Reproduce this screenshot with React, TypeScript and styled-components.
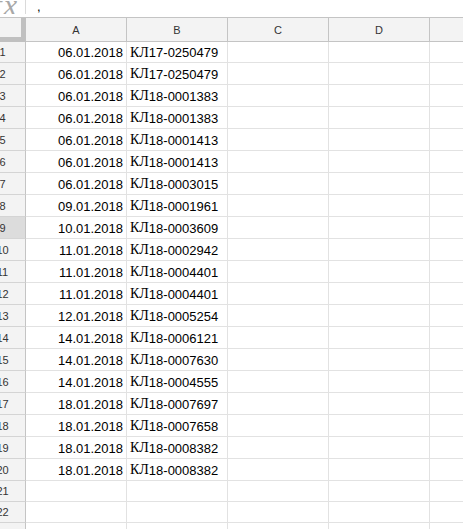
import React from "react";
import styled, { createGlobalStyle } from "styled-components";

const GlobalStyle = createGlobalStyle`
  html, body { margin: 0; padding: 0; background: #ffffff; overflow: hidden; }
  body { font-family: "Liberation Sans", Arial, sans-serif; }
`;

const Page = styled.div`
  width: 505px;
  margin-left: -20px;
  height: 529px;
  overflow: hidden;
`;

const FormulaBar = styled.div`
  display: flex;
  height: 14px;
  margin-bottom: 3px;
  overflow: hidden;
`;

const FxBox = styled.div`
  width: 46px;
  box-sizing: border-box;
  border-right: 1px solid #dadada;
  display: flex;
  justify-content: flex-end;
  align-items: flex-end;
  padding-right: 6px;
  overflow: hidden;
`;

const FxText = styled.span`
  font-family: "Liberation Serif", "Times New Roman", serif;
  font-style: italic;
  font-size: 30px;
  line-height: 30px;
  color: #a8a8a8;
  margin-bottom: -6px;
  letter-spacing: 2px;
`;

const FormulaText = styled.div`
  padding-left: 11px;
  font-size: 13px;
  line-height: 14px;
  color: #000;
`;

const Sheet = styled.div`
  display: flex;
  flex-direction: column;
`;

const cols = "46px 101px 101px 101px 101px 101px";

const HeaderRow = styled.div`
  display: grid;
  grid-template-columns: ${cols};
  border-top: 1px solid #c4c4c4;
  height: 24px;
`;

const Corner = styled.div`
  background: #f3f3f3;
  border-right: 5px solid #c0c0c0;
  border-bottom: 5px solid #c0c0c0;
  box-sizing: border-box;
`;

const ColHeader = styled.div`
  background: #f3f3f3;
  border-right: 1px solid #c4c4c4;
  border-bottom: 1px solid #c4c4c4;
  box-sizing: border-box;
  display: flex;
  align-items: center;
  justify-content: center;
  font-size: 11px;
  color: #333;
`;

const Row = styled.div<{ $h: number }>`
  display: grid;
  grid-template-columns: ${cols};
  height: ${(p) => p.$h}px;
`;

const RowHeader = styled.div<{ $selected?: boolean }>`
  background: ${(p) => (p.$selected ? "#dcdcdc" : "#f3f3f3")};
  border-right: 1px solid #c4c4c4;
  border-bottom: 1px solid #d4d4d4;
  box-sizing: border-box;
  display: flex;
  align-items: center;
  justify-content: center;
  font-size: 11px;
  color: #333;
`;

const Cell = styled.div<{ $align?: "left" | "right" }>`
  border-right: 1px solid #e2e2e2;
  border-bottom: 1px solid #e2e2e2;
  box-sizing: border-box;
  display: flex;
  align-items: center;
  justify-content: ${(p) => (p.$align === "right" ? "flex-end" : "flex-start")};
  padding: 1px 3px 0 3px;
  font-size: 13px;
  color: #000;
  white-space: nowrap;
  overflow: hidden;
`;

const Cyr = styled.span`
  font-family: "Liberation Serif", "Times New Roman", serif;
  font-size: 14px;
`;

const data: [string, string][] = [
  ["06.01.2018", "17-0250479"],
  ["06.01.2018", "17-0250479"],
  ["06.01.2018", "18-0001383"],
  ["06.01.2018", "18-0001383"],
  ["06.01.2018", "18-0001413"],
  ["06.01.2018", "18-0001413"],
  ["06.01.2018", "18-0003015"],
  ["09.01.2018", "18-0001961"],
  ["10.01.2018", "18-0003609"],
  ["11.01.2018", "18-0002942"],
  ["11.01.2018", "18-0004401"],
  ["11.01.2018", "18-0004401"],
  ["12.01.2018", "18-0005254"],
  ["14.01.2018", "18-0006121"],
  ["14.01.2018", "18-0007630"],
  ["14.01.2018", "18-0004555"],
  ["18.01.2018", "18-0007697"],
  ["18.01.2018", "18-0007658"],
  ["18.01.2018", "18-0008382"],
  ["18.01.2018", "18-0008382"],
];

const rowHeight = (n: number) => (n === 1 || n > 20 ? 21 : 22);

export default function App() {
  const rows = Array.from({ length: 23 }, (_, i) => i + 1);
  return (
    <>
      <GlobalStyle />
      <Page>
        <FormulaBar>
          <FxBox>
            <FxText>fx</FxText>
          </FxBox>
          <FormulaText>,</FormulaText>
        </FormulaBar>
        <Sheet>
          <HeaderRow>
            <Corner />
            {["A", "B", "C", "D", ""].map((c, i) => (
              <ColHeader key={i}>{c}</ColHeader>
            ))}
          </HeaderRow>
          {rows.map((n) => {
            const d = data[n - 1];
            return (
              <Row key={n} $h={rowHeight(n)}>
                <RowHeader $selected={n === 9}>{n}</RowHeader>
                <Cell $align="right">{d ? d[0] : ""}</Cell>
                <Cell>
                  {d ? (
                    <>
                      <Cyr>КЛ</Cyr>
                      {d[1]}
                    </>
                  ) : (
                    ""
                  )}
                </Cell>
                <Cell />
                <Cell />
                <Cell />
              </Row>
            );
          })}
        </Sheet>
      </Page>
    </>
  );
}
